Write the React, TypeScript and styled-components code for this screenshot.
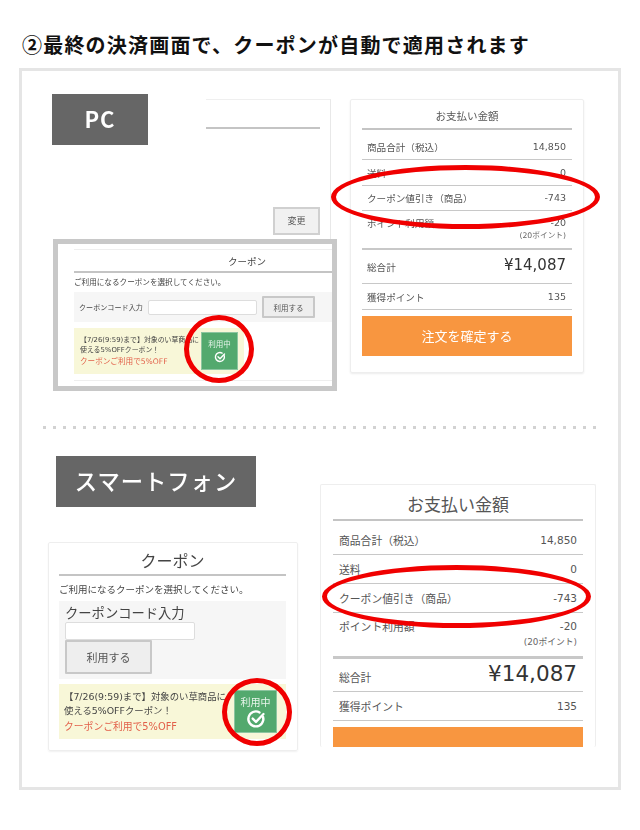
import React from "react";
import styled, { createGlobalStyle } from "styled-components";

const FONT = `"Noto Sans CJK JP", "Noto Sans", "Liberation Sans", sans-serif`;
const LATIN = `"DejaVu Sans", "Noto Sans CJK JP", sans-serif`;

const Global = createGlobalStyle`
  html, body { margin: 0; padding: 0; background: #fff; }
  body { font-family: ${FONT}; color: #555; }
  * { box-sizing: border-box; }
`;

const Page = styled.div`
  width: 640px;
  height: 830px;
  overflow: hidden;
  padding: 31px 19px 0;
`;
const Heading = styled.h2`
  margin: 0 0 9px 3px;
  height: 28px;
  font-size: 20px;
  line-height: 28px;
  font-weight: 700;
  letter-spacing: 1.2px;
  color: #111;
  white-space: nowrap;
`;
const Frame = styled.div`
  width: 602px;
  height: 722px;
  border: 3px solid #e5e5e5;
`;
const Section = styled.section<{ $sp?: boolean }>`
  position: relative;
  display: flex;
  align-items: flex-start;
  padding: ${(p) => (p.$sp ? "0 0 0 26px" : "23px 0 0 30px")};
  gap: ${(p) => (p.$sp ? "22px" : "13px")};
  filter: blur(0.3px);
`;
const LeftColumn = styled.div<{ $sp?: boolean }>`
  width: ${(p) => (p.$sp ? "250px" : "285px")};
  flex: none;
`;
const TopRow = styled.div`
  display: flex;
  height: 145px;
  gap: 58px;
`;
const Badge = styled.div<{ $sp?: boolean }>`
  flex: none;
  width: ${(p) => (p.$sp ? "200px" : "96px")};
  height: 51px;
  margin-left: ${(p) => (p.$sp ? "8px" : "0")};
  padding-bottom: ${(p) => (p.$sp ? "3px" : "4px")};
  background: #666;
  color: #fff;
  display: flex;
  align-items: center;
  justify-content: center;
  font-size: ${(p) => (p.$sp ? "22.3px" : "22px")};
  font-weight: ${(p) => (p.$sp ? 500 : 600)};
  letter-spacing: 1px;
`;
const AddressCard = styled.div`
  width: 125px;
  height: 140px;
  margin-top: 5px;
  padding-top: 27px;
  border-top: 1px solid #efefef;
  border-right: 1px solid #e8e8e8;
  display: flex;
  flex-direction: column;
  align-items: flex-end;
`;
const AddressRule = styled.div`
  width: 114px;
  margin-right: 10px;
  border-top: 2px solid #c4c4c4;
`;
const ChangeButton = styled.div`
  width: 47px;
  height: 28px;
  margin: 78px 10px 0 0;
  border: 2px solid #d0d0d0;
  background: #f1f1f1;
  font-size: 9px;
  line-height: 24px;
  text-align: center;
  color: #555;
`;
const CouponHighlight = styled.div`
  position: relative;
  width: 284px;
  height: 152px;
  margin-left: 1px;
  border: 5px solid #c8c8c8;
  padding: 5px 0 0 16px;
  overflow: hidden;
`;
const CouponCard = styled.div<{ $sp?: boolean }>`
  position: relative;
  display: flex;
  flex-direction: column;
  ${(p) =>
    p.$sp
      ? `width: 250px; height: 209px; margin-top: 35px; padding: 0 11px 0 10px;
         border: 1px solid #eee; box-shadow: 0 1px 2px rgba(0,0,0,.06); border-radius: 2px;`
      : `width: 258px; height: 132px; border-top: 1px solid #eee; border-bottom: 1px solid #eee;`}
`;
const CouponTitle = styled.div<{ $sp?: boolean }>`
  flex: none;
  height: ${(p) => (p.$sp ? "33px" : "23px")};
  border-bottom: 2px solid #c4c4c4;
  text-align: center;
  font-size: ${(p) => (p.$sp ? "16px" : "9.5px")};
  line-height: ${(p) => (p.$sp ? "34px" : "22px")};
  color: #444;
  padding-left: ${(p) => (p.$sp ? "0" : "88px")};
`;
const CouponLead = styled.div<{ $sp?: boolean }>`
  flex: none;
  height: ${(p) => (p.$sp ? "25px" : "19px")};
  font-size: ${(p) => (p.$sp ? "9.5px" : "7.6px")};
  line-height: ${(p) => (p.$sp ? "26px" : "18px")};
  color: #444;
  white-space: nowrap;
`;
const CodeBlock = styled.div<{ $sp?: boolean }>`
  flex: none;
  background: #f6f6f6;
  ${(p) =>
    p.$sp
      ? `height: 78px; padding: 3px 6px 0; display: block;`
      : `height: 30px; padding: 0 0 0 5px; display: flex; align-items: center;`}
`;
const CodeLabel = styled.div<{ $sp?: boolean }>`
  font-size: ${(p) => (p.$sp ? "13.3px" : "7.1px")};
  line-height: ${(p) => (p.$sp ? "18px" : "12px")};
  width: ${(p) => (p.$sp ? "auto" : "69px")};
  color: #444;
  white-space: nowrap;
`;
const CodeInput = styled.div<{ $sp?: boolean }>`
  background: #fff;
  border: 1px solid #ddd;
  border-radius: 2px;
  width: ${(p) => (p.$sp ? "130px" : "109px")};
  height: ${(p) => (p.$sp ? "18px" : "15px")};
`;
const ApplyButton = styled.div<{ $sp?: boolean }>`
  background: #eee;
  border: 2px solid #c8c8c8;
  border-radius: 1px;
  text-align: center;
  color: #555;
  ${(p) =>
    p.$sp
      ? `width: 87px; height: 34px; font-size: 11px; line-height: 31px;`
      : `width: 53px; height: 22px; margin-left: 5px; font-size: 7.5px; line-height: 19px;`}
`;
const Offer = styled.div<{ $sp?: boolean }>`
  flex: none;
  display: flex;
  align-items: center;
  justify-content: space-between;
  background: #f8f7d8;
  ${(p) =>
    p.$sp
      ? `height: 55px; margin-top: 5px; padding: 0 9px 0 5px;`
      : `width: 170px; height: 46px; margin-top: 6px; padding: 0 6px 0 6px;`}
`;
const OfferText = styled.div<{ $sp?: boolean }>`
  font-family: ${LATIN};
  font-size: ${(p) => (p.$sp ? "9.4px" : "6.9px")};
  line-height: ${(p) => (p.$sp ? "14.5px" : "10px")};
  color: #444;
  white-space: nowrap;
  min-width: 0;
  width: ${(p) => (p.$sp ? "170px" : "121px")};
`;
const OfferLine = styled.div`
  display: block;
`;
const OfferRed = styled.div<{ $sp?: boolean }>`
  color: #e2604a;
  font-size: ${(p) => (p.$sp ? "9.8px" : "7.6px")};
  line-height: ${(p) => (p.$sp ? "15px" : "13px")};
`;
const UsingTag = styled.div<{ $sp?: boolean }>`
  flex: none;
  background: #53a96e;
  border: 1px solid #8cc5a0;
  color: #e8f5ec;
  display: flex;
  flex-direction: column;
  align-items: center;
  justify-content: center;
  font-size: ${(p) => (p.$sp ? "10px" : "7.5px")};
  line-height: ${(p) => (p.$sp ? "13px" : "10px")};
  width: ${(p) => (p.$sp ? "43px" : "37px")};
  height: ${(p) => (p.$sp ? "43px" : "38px")};
  svg {
    display: block;
    width: ${(p) => (p.$sp ? "20px" : "12px")};
    height: ${(p) => (p.$sp ? "20px" : "12px")};
    margin-top: ${(p) => (p.$sp ? "1px" : "2px")};
  }
`;
const PayCard = styled.div<{ $sp?: boolean }>`
  position: relative;
  flex: none;
  background: #fff;
  border: 1px solid #eee;
  border-radius: 2px;
  overflow: visible;
  ${(p) =>
    p.$sp
      ? `width: 276px; height: 263px; margin-top: 28px; padding: 0 12px; border-bottom: none;`
      : `width: 234px; height: 274px; margin-top: 5px; padding: 0 11px; box-shadow: 0 1px 2px rgba(0,0,0,.08);`}
`;
const PayTitle = styled.div<{ $sp?: boolean }>`
  height: ${(p) => (p.$sp ? "36px" : "30px")};
  border-bottom: 2px solid #c4c4c4;
  text-align: center;
  font-size: ${(p) => (p.$sp ? "17px" : "10.5px")};
  line-height: ${(p) => (p.$sp ? "38px" : "32px")};
  color: #555;
`;
const PayRow = styled.div<{ $h: number; $rule?: number; $sp?: boolean; $top?: boolean; $nudge?: number }>`
  height: ${(p) => p.$h}px;
  border-bottom: ${(p) => p.$rule ?? 1}px solid #c8c8c8;
  padding: ${(p) => (p.$top ? (p.$sp ? "5px" : "5px") : `${p.$nudge ?? 0}px`)} ${(p) => (p.$sp ? "6px" : "6px")} 0 ${(p) => (p.$sp ? "6px" : "5px")};
  display: flex;
  justify-content: space-between;
  align-items: ${(p) => (p.$top ? "flex-start" : "center")};
  font-size: ${(p) => (p.$sp ? "10.8px" : "9.6px")};
  color: #555;
  white-space: nowrap;
`;
const PayValue = styled.div<{ $sp?: boolean }>`
  font-family: ${LATIN};
  font-size: ${(p) => (p.$sp ? "10.5px" : "9.5px")};
  line-height: ${(p) => (p.$sp ? "16px" : "14px")};
  text-align: right;
`;
const PaySub = styled.div<{ $sp?: boolean }>`
  font-size: ${(p) => (p.$sp ? "8.8px" : "7.7px")};
  line-height: 11px;
  margin-top: ${(p) => (p.$sp ? "3px" : "0")};
  color: #666;
`;
const Total = styled.div<{ $sp?: boolean }>`
  font-family: ${LATIN};
  font-size: ${(p) => (p.$sp ? "21.5px" : "15px")};
  line-height: 24px;
  color: #333;
  margin-top: ${(p) => (p.$sp ? "-5px" : "-3px")};
`;
const OrderButton = styled.div<{ $sp?: boolean }>`
  background: #f89640;
  color: #fff;
  text-align: center;
  font-size: 13px;
  ${(p) =>
    p.$sp
      ? `height: 20px; margin-top: 6px;`
      : `height: 40px; margin-top: 6px; line-height: 40px;`}
`;
const Dots = styled.div`
  width: 553px;
  height: 3px;
  margin: 35px 0 27px 21px;
  background: linear-gradient(90deg, #d2d2d2 3px, transparent 3px) 0 0 / 10px 3px repeat-x;
`;
const Ring = styled.div<{ $x: number; $y: number; $w: number; $h: number }>`
  position: absolute;
  left: ${(p) => p.$x}px;
  top: ${(p) => p.$y}px;
  width: ${(p) => p.$w}px;
  height: ${(p) => p.$h}px;
  border: 5px solid #f00000;
  border-radius: 50%;
  pointer-events: none;
`;

const Check = () => (
  <svg viewBox="0 0 24 24" fill="none" stroke="#fff" strokeWidth="2.8" strokeLinecap="round" strokeLinejoin="round">
    <path d="M20.5 9.5a9 9 0 1 1-4.2-5.4" />
    <path d="M8 11.5l4 4 9-9.5" />
  </svg>
);

const CouponBody = ({ sp }: { sp?: boolean }) => (
  <CouponCard $sp={sp}>
    <CouponTitle $sp={sp}>クーポン</CouponTitle>
    <CouponLead $sp={sp}>ご利用になるクーポンを選択してください。</CouponLead>
    <CodeBlock $sp={sp}>
      <CodeLabel $sp={sp}>クーポンコード入力</CodeLabel>
      <CodeInput $sp={sp} />
      <ApplyButton $sp={sp}>利用する</ApplyButton>
    </CodeBlock>
    <Offer $sp={sp}>
      <OfferText $sp={sp}>
        <OfferLine>【7/26(9:59)まで】対象のい草商品に</OfferLine>
        <OfferLine>使える5%OFFクーポン！</OfferLine>
        <OfferRed $sp={sp}>クーポンご利用で5%OFF</OfferRed>
      </OfferText>
      <UsingTag $sp={sp}>
        利用中
        <Check />
      </UsingTag>
    </Offer>
  </CouponCard>
);

const PayBody = ({ sp }: { sp?: boolean }) => (
  <PayCard $sp={sp}>
    <PayTitle $sp={sp}>お支払い金額</PayTitle>
    <PayRow $sp={sp} $h={sp ? 34 : 30} $nudge={sp ? 5 : 4}>
      <span>商品合計（税込）</span>
      <PayValue $sp={sp}>14,850</PayValue>
    </PayRow>
    <PayRow $sp={sp} $h={sp ? 29 : 26}>
      <span>送料</span>
      <PayValue $sp={sp}>0</PayValue>
    </PayRow>
    <PayRow $sp={sp} $h={sp ? 29 : 25}>
      <span>クーポン値引き（商品）</span>
      <PayValue $sp={sp}>-743</PayValue>
    </PayRow>
    <PayRow $sp={sp} $h={sp ? 46 : 39} $rule={sp ? 3 : 2} $top>
      <span>ポイント利用額</span>
      <PayValue $sp={sp}>
        -20
        <PaySub $sp={sp}>(20ポイント)</PaySub>
      </PayValue>
    </PayRow>
    <PayRow $sp={sp} $h={sp ? 33 : 34} $nudge={sp ? 3 : 0}>
      <span>総合計</span>
      <Total $sp={sp}>¥14,087</Total>
    </PayRow>
    <PayRow $sp={sp} $h={sp ? 29 : 26}>
      <span>獲得ポイント</span>
      <PayValue $sp={sp}>135</PayValue>
    </PayRow>
    <OrderButton $sp={sp}>{sp ? "" : "注文を確定する"}</OrderButton>
  </PayCard>
);

export default function App() {
  return (
    <Page>
      <Global />
      <Heading>②最終の決済画面で、クーポンが自動で適用されます</Heading>
      <Frame>
        <Section>
          <LeftColumn>
            <TopRow>
              <Badge>PC</Badge>
              <AddressCard>
                <AddressRule />
                <ChangeButton>変更</ChangeButton>
              </AddressCard>
            </TopRow>
            <CouponHighlight>
              <CouponBody />
            </CouponHighlight>
          </LeftColumn>
          <PayBody />
          <Ring $x={162} $y={244} $w={70} $h={68} />
          <Ring $x={309} $y={94} $w={269} $h={64} />
        </Section>
        <Dots />
        <Section $sp>
          <LeftColumn $sp>
            <Badge $sp>スマートフォン</Badge>
            <CouponBody sp />
          </LeftColumn>
          <PayBody sp />
          <Ring $x={200} $y={222} $w={70} $h={68} />
          <Ring $x={300} $y={109} $w={269} $h={63} />
        </Section>
      </Frame>
    </Page>
  );
}
